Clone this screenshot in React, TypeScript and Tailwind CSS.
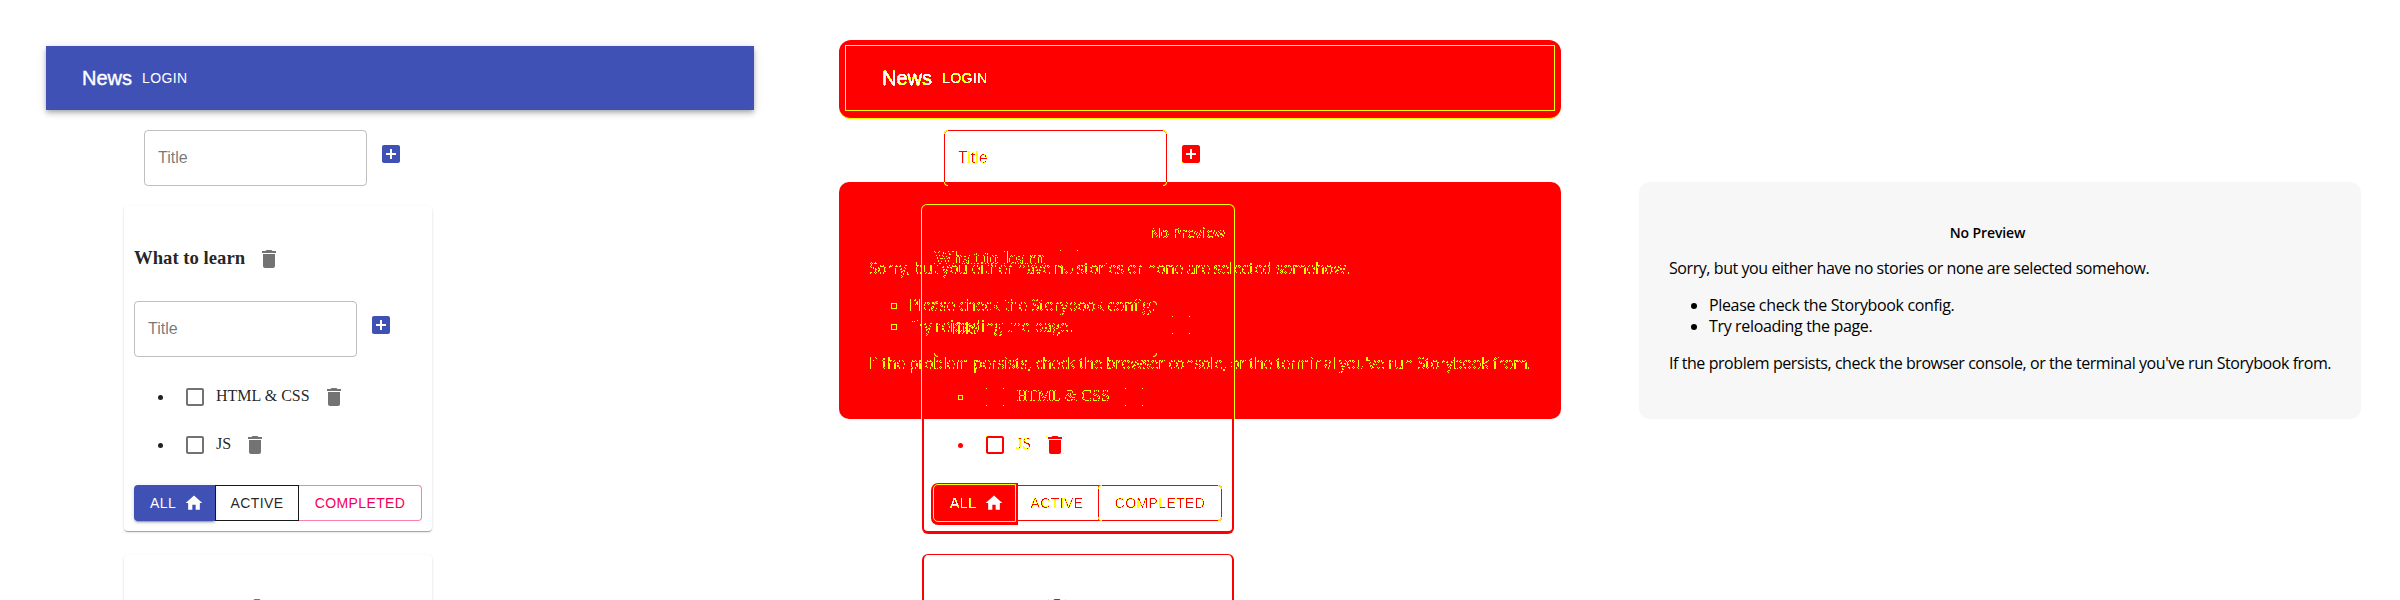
import React from 'react';

type Mode = 'normal' | 'diff';

const DELETE_PATH = 'M6 19c0 1.1.9 2 2 2h8c1.1 0 2-.9 2-2V7H6v12zM19 4h-3.5l-1-1h-5l-1 1H5v2h14V4z';
const ADD_PATH = 'M19 3H5c-1.11 0-2 .9-2 2v14c0 1.1.89 2 2 2h14c1.1 0 2-.9 2-2V5c0-1.1-.9-2-2-2zm-2 10h-4v4h-2v-4H7v-2h4V7h2v4h4v2z';
const BOX_PATH = 'M19 5v14H5V5h14m0-2H5c-1.1 0-2 .9-2 2v14c0 1.1.9 2 2 2h14c1.1 0 2-.9 2-2V5c0-1.1-.9-2-2-2z';
const HOME_PATH = 'M10 20v-6h4v6h5v-8h3L12 3 2 12h3v8z';

/* Filters that split glyphs into an anti-aliased rim and a solid core. */
function DiffFilters() {
  const filters = [
    { id: 'rim-red', core: '#ff0000', cut: '0 0 0 0 0 0 0 0 1 1' },
    { id: 'rim-white', core: '#ffffff', cut: '0 0 0 0 0 0 0 0 1 1' },
  ];
  return (
    <svg className="absolute size-0" aria-hidden="true">
      {filters.map((f) => (
        <filter key={f.id} id={f.id} colorInterpolationFilters="sRGB" x="-2%" y="-10%" width="104%" height="120%">
          <feComponentTransfer in="SourceAlpha" result="rimMask">
            <feFuncA type="discrete" tableValues="0 0 0 1 1 1 1 1 1 1" />
          </feComponentTransfer>
          <feFlood floodColor="#ffff00" />
          <feComposite in2="rimMask" operator="in" result="rim" />
          <feComponentTransfer in="SourceAlpha" result="coreMask">
            <feFuncA type="discrete" tableValues={f.cut} />
          </feComponentTransfer>
          <feFlood floodColor={f.core} />
          <feComposite in2="coreMask" operator="in" result="core" />
          <feMerge>
            <feMergeNode in="rim" />
            <feMergeNode in="core" />
          </feMerge>
        </filter>
      ))}
    </svg>
  );
}

function Corners() {
  return (
    <>
      <i className="absolute left-0 top-0 size-px bg-[#ffff00]" />
      <i className="absolute right-0 top-0 size-px bg-[#ffff00]" />
      <i className="absolute bottom-0 left-0 size-px bg-[#ffff00]" />
      <i className="absolute bottom-0 right-0 size-px bg-[#ffff00]" />
    </>
  );
}

function Icon({ d, mode, color, pad = 'p-3' }: { d: string; mode: Mode; color: string; pad?: string }) {
  return (
    <span className={`relative block shrink-0 ${pad}`}>
      <svg viewBox="0 0 24 24" className={`block size-6 fill-current ${mode === 'diff' ? 'text-[#ff0000]' : color}`}>
        <path d={d} />
      </svg>
      {mode === 'diff' && (
        <span className={`absolute inset-0 ${pad}`}>
          <span className="block size-6 p-[3px]">
            <span className="relative block size-[18px]">
              <Corners />
            </span>
          </span>
        </span>
      )}
    </span>
  );
}

/* Rounded one-pixel marks at the corners of an outlined field. */
function FieldCorners() {
  return (
    <>
      <i className="absolute -left-px -top-px size-1 rounded-tl border-l border-t border-[#ffff00]" />
      <i className="absolute -right-px -top-px size-1 rounded-tr border-r border-t border-[#ffff00]" />
      <i className="absolute -bottom-px -left-px size-1 rounded-bl border-b border-l border-[#ffff00]" />
      <i className="absolute -bottom-px -right-px size-1 rounded-br border-b border-r border-[#ffff00]" />
    </>
  );
}

function AddItem({ mode }: { mode: Mode }) {
  const diff = mode === 'diff';
  return (
    <div className="flex items-start font-['Liberation_Sans',sans-serif]">
      <div className={`relative flex h-14 w-[223px] items-center rounded border px-[13px] text-base ${diff ? 'border-[#ff0000] text-black' : 'border-black/25 text-black/55'}`}>
        <span className={diff ? '[filter:url(#rim-red)]' : ''}>Title</span>
        {diff && <FieldCorners />}
      </div>
      <Icon d={ADD_PATH} mode={mode} color="text-[#3f51b5]" />
    </div>
  );
}

function Task({ mode, label, bullet }: { mode: Mode; label: string; bullet: string }) {
  const diff = mode === 'diff';
  return (
    <li className="flex h-12 items-center">
      <span className={`-ml-4 mr-[11px] block size-[5px] shrink-0 ${bullet}`} />
      <Icon d={BOX_PATH} mode={mode} color="text-black/55" pad="p-[9px]" />
      <span className={`pb-0.5 ${diff ? '[filter:url(#rim-red)]' : ''}`}>{label}</span>
      <Icon d={DELETE_PATH} mode={mode} color="text-black/55" />
    </li>
  );
}

function Filters({ mode }: { mode: Mode }) {
  const diff = mode === 'diff';
  return (
    <div className="flex h-9 font-['Liberation_Sans',sans-serif] text-[14px] tracking-[0.4px]">
      <div
        className={`relative flex w-[81px] items-center rounded-l pl-4 text-white ${
          diff
            ? 'z-10 bg-[#ff0000] outline-1 outline-[#ffff00] shadow-[0_1px_0_3px_#ff0000]'
            : 'bg-[#3f51b5] shadow-[0_3px_1px_-2px_rgba(0,0,0,0.2),0_2px_2px_0_rgba(0,0,0,0.14),0_1px_5px_0_rgba(0,0,0,0.12)]'
        }`}
      >
        <span className={`w-[26px] ${diff ? '[filter:url(#rim-white)]' : ''}`}>ALL</span>
        <svg viewBox="0 0 24 24" className="ml-2 size-5 fill-current">
          <path d={HOME_PATH} />
        </svg>
      </div>
      <div className={`relative flex w-[84px] items-center justify-center border ${diff ? 'border-[#ff0000] text-black' : 'border-black/90 text-black/87'}`}>
        <span className={diff ? '[filter:url(#rim-red)]' : ''}>ACTIVE</span>
      </div>
      <div className={`relative flex w-[123px] items-center justify-center rounded-r border border-l-0 ${diff ? 'border-[#ff0000] text-black' : 'border-[#f50057]/50 text-[#f50057]'}`}>
        <span className={diff ? '[filter:url(#rim-red)]' : ''}>COMPLETED</span>
        {diff && <FieldCorners />}
      </div>
    </div>
  );
}

const cardShadow =
  'shadow-[0_2px_1px_-1px_rgba(0,0,0,0.2),0_1px_1px_0_rgba(0,0,0,0.14),0_1px_3px_0_rgba(0,0,0,0.12)]';

function TodoApp({ mode }: { mode: Mode }) {
  const diff = mode === 'diff';
  return (
    <div className="relative h-[600px] w-[800px] overflow-hidden px-[46px] pt-[46px]">
      <header
        className={`relative flex h-16 items-center pl-9 font-['Liberation_Sans',sans-serif] text-white ${
          diff ? '' : 'bg-[#3f51b5] shadow-[0_2px_4px_-1px_rgba(0,0,0,0.2),0_4px_5px_0_rgba(0,0,0,0.14),0_1px_10px_0_rgba(0,0,0,0.12)]'
        }`}
      >
        {diff && (
          <>
            <span className="absolute -bottom-[9px] -left-[7px] -right-[7px] -top-[6px] rounded-[12px] border-b border-[#ffff00] bg-[#ff0000]" />
            <span className="absolute -inset-px border border-[#ffff00]" />
          </>
        )}
        <span className={`relative w-[51px] text-[20px] font-medium [-webkit-text-stroke:0.4px_white] ${diff ? '[filter:url(#rim-white)]' : ''}`}>News</span>
        <span className={`relative ml-[9px] text-[14px] tracking-[0.4px] ${diff ? '[filter:url(#rim-white)]' : ''}`}>LOGIN</span>
      </header>
      <div className="mt-5 pl-[98px]">
        <AddItem mode={mode} />
      </div>
      <section
        className={`relative ml-[78px] mt-5 h-[325px] w-[308px] rounded px-2.5 pt-[29px] font-['Liberation_Serif',serif] text-base ${
          diff ? 'text-black' : `text-black/87 ${cardShadow}`
        }`}
      >
        {diff && (
          <>
            <span className="absolute -left-[2px] -right-[2px] -bottom-[3px] -top-px rounded-[6px] border-x-2 border-b-[3px] border-[#ff0000]" />
            <span className="absolute -left-[3px] -right-[3px] -top-[2px] h-[215px] rounded-t-[6px] border border-b-0 border-[#ffff00]" />
          </>
        )}
        <h3 className="flex h-12 items-center text-[18.72px] font-bold">
          <span className={`w-[111px] whitespace-nowrap pb-0.5 ${diff ? '[filter:url(#rim-red)]' : ''}`}>What to learn</span>
          <Icon d={DELETE_PATH} mode={mode} color="text-black/55" />
        </h3>
        <div className="mt-[18px]">
          <AddItem mode={mode} />
        </div>
        <ul className="my-4 pl-10">
          <Task mode={mode} label="HTML & CSS" bullet={diff ? 'border border-[#ffff00]' : 'rounded-full bg-black/87'} />
          <Task mode={mode} label="JS" bullet={diff ? 'rounded-full bg-[#ff0000]' : 'rounded-full bg-black/87'} />
        </ul>
        <Filters mode={mode} />
      </section>
      <section className={`relative ml-[78px] mt-6 h-[325px] w-[308px] rounded px-2.5 pt-[29px] ${diff ? '' : cardShadow}`}>
        {diff && <span className="absolute -left-[2px] -right-[2px] -top-px bottom-0 rounded-[6px] border-x-2 border-t border-[#ff0000]" />}
        <h3 className="flex h-12 items-center pl-[99px]">
          <Icon d={DELETE_PATH} mode={mode} color="text-black/55" />
        </h3>
      </section>
    </div>
  );
}

function NoPreview({ mode }: { mode: Mode }) {
  const diff = mode === 'diff';
  const text = diff ? '[filter:url(#rim-red)]' : '';
  const dot = diff ? 'border border-[#ffff00]' : 'rounded-full bg-black';
  return (
    <div className="h-[600px] w-[800px] px-[39px] pt-[182px]">
      <div
        className={`h-[237px] w-[722px] rounded-[10px] px-[30px] pt-[41px] font-['Open_Sans',sans-serif] text-base leading-[21px] tracking-[-0.43px] text-black ${
          diff ? 'bg-[#ff0000]' : 'bg-[#f7f7f7]'
        }`}
      >
        <h1 className={`pr-[25px] text-center text-[14px] font-semibold leading-[19px] tracking-[-0.1px] ${text}`}>No Preview</h1>
        <p className={`mt-4 whitespace-nowrap ${text}`}>Sorry, but you either have no stories or none are selected somehow.</p>
        <ul className="my-4 pl-10 tracking-[-0.35px]">
          {['Please check the Storybook config.', 'Try reloading the page.'].map((t) => (
            <li key={t} className="flex items-center">
              <span className={`-ml-[18px] mr-3 block size-1.5 ${dot}`} />
              <span className={text}>{t}</span>
            </li>
          ))}
        </ul>
        <p className={`whitespace-nowrap ${text}`}>
          If the problem persists, check the browser console, or the terminal you've run Storybook from.
        </p>
      </div>
    </div>
  );
}

export default function App() {
  return (
    <div className="relative flex h-[600px] w-[2400px] overflow-hidden bg-white">
      <DiffFilters />
      <TodoApp mode="normal" />
      <div className="grid h-[600px] w-[800px] overflow-hidden [&>*]:col-start-1 [&>*]:row-start-1">
        <NoPreview mode="diff" />
        <TodoApp mode="diff" />
      </div>
      <NoPreview mode="normal" />
    </div>
  );
}
